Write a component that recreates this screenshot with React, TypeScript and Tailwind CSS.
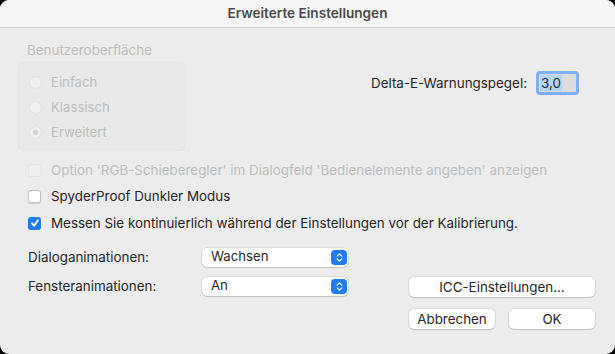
import { ChevronsUpDown } from 'lucide-react'

const font = { fontFamily: 'Inter, "Liberation Sans", sans-serif' }

function Radio({ label, checked }: { label: string; checked?: boolean }) {
  return (
    <div className="flex h-[25px] items-center gap-[9px]">
      <span className="flex h-[13px] w-[13px] items-center justify-center rounded-full border border-[#e0e0e0] bg-[#f0f0f0]">
        {checked && <span className="h-[5px] w-[5px] rounded-full bg-[#d2d2d2]" />}
      </span>
      <span className="text-[13.2px] text-[#bdbdbd]">{label}</span>
    </div>
  )
}

function Check({ label, checked, disabled, className }: { label: string; checked?: boolean; disabled?: boolean; className?: string }) {
  return (
    <div className={`flex h-[16px] items-center gap-[10px] ${className ?? ''}`}>
      {checked ? (
        <span className="flex h-[13px] w-[13px] items-center justify-center rounded-[3px] bg-[#1f7cf5]">
          <svg width="10" height="10" viewBox="0 0 10 10">
            <path d="M2 5.3 L4.1 7.6 L8 2.4" fill="none" stroke="white" strokeWidth="1.8" strokeLinecap="round" strokeLinejoin="round" />
          </svg>
        </span>
      ) : (
        <span
          className={
            disabled
              ? 'h-[13px] w-[13px] rounded-[3px] border border-[#e2e2e2] bg-[#efefef]'
              : 'h-[13px] w-[13px] rounded-[3px] border border-[#c4c4c4] bg-white shadow-[0_0.5px_1px_rgba(0,0,0,0.15)]'
          }
        />
      )}
      <span className={disabled ? 'text-[13.4px] text-[#bdbdbd]' : 'text-[13.4px] text-[#262626]'}>{label}</span>
    </div>
  )
}

function Select({ value }: { value: string }) {
  return (
    <div className="flex h-[19px] w-[146px] items-center justify-between rounded-[5px] bg-white pl-[9px] pr-[1px] shadow-[0_0_0_0.5px_rgba(0,0,0,0.15),0_1px_1px_rgba(0,0,0,0.12)]">
      <span className="text-[13.2px] text-[#262626]">{value}</span>
      <span className="flex h-[15px] w-[16px] items-center justify-center rounded-[4px] bg-[#1f7cf5] text-white">
        <ChevronsUpDown size={11} strokeWidth={2.5} />
      </span>
    </div>
  )
}

function Button({ label, className }: { label: string; className: string }) {
  return (
    <button
      className={`flex h-[20px] items-center justify-center rounded-[5px] bg-white text-[13.4px] text-[#262626] shadow-[0_0_0_0.5px_rgba(0,0,0,0.15),0_1px_1px_rgba(0,0,0,0.12)] ${className}`}
    >
      {label}
    </button>
  )
}

export default function App() {
  return (
    <div className="h-[354px] w-[615px] bg-black">
      <div className="h-[354px] w-[615px] overflow-hidden rounded-[9px] bg-[#ececec]" style={font}>
        <div className="flex h-[28px] items-center justify-center border-b border-[#d2d2d2] bg-[#f6f6f6]">
          <span className="text-[13.6px] font-semibold text-[#4a4a4a]">Erweiterte Einstellungen</span>
        </div>

        <div className="flex h-[123px] items-start justify-between pl-[18px] pr-[36px]">
          <div className="pt-[14px]">
            <div className="pl-[9px] text-[13.4px] leading-[16px] text-[#bdbdbd]">Benutzeroberfläche</div>
            <div className="mt-[4px] h-[89px] w-[167px] rounded-[5px] border border-[#e3e3e3] bg-[#e9e9e9] pl-[10px] pt-[7px]">
              <Radio label="Einfach" />
              <Radio label="Klassisch" />
              <Radio label="Erweitert" checked />
            </div>
          </div>
          <div className="flex items-center gap-[9px] pt-[43px]">
            <span className="text-[13.4px] text-[#262626]">Delta-E-Warnungspegel:</span>
            <div className="flex h-[24px] w-[43px] items-center rounded-[4px] border-[3px] border-[#80b0f4] bg-[#dcdcdc] pl-[1px]">
              <span className="bg-[#b3d4fd] px-[1px] text-[13.4px] leading-[16px] text-[#262626]">3,0</span>
            </div>
          </div>
        </div>

        <div className="flex flex-col pl-[28px] pt-[11px]">
          <Check label="Option 'RGB-Schieberegler' im Dialogfeld 'Bedienelemente angeben' anzeigen" disabled />
          <Check label="SpyderProof Dunkler Modus" className="mt-[10px]" />
          <Check label="Messen Sie kontinuierlich während der Einstellungen vor der Kalibrierung." checked className="mt-[11px]" />
        </div>

        <div className="flex items-start justify-between pl-[28px] pr-[20px] pt-[16px]">
          <div className="flex flex-col gap-[9px]">
            <div className="flex items-center">
              <span className="w-[174px] text-[13.4px] text-[#262626]">Dialoganimationen:</span>
              <Select value="Wachsen" />
            </div>
            <div className="flex items-center">
              <span className="w-[174px] text-[13.4px] text-[#262626]">Fensteranimationen:</span>
              <Select value="An" />
            </div>
          </div>
          <div className="flex flex-col gap-[12px] pt-[30px]">
            <Button label="ICC-Einstellungen..." className="w-[186px]" />
            <div className="flex justify-between">
              <Button label="Abbrechen" className="w-[86px]" />
              <Button label="OK" className="w-[86px]" />
            </div>
          </div>
        </div>
      </div>
    </div>
  )
}
